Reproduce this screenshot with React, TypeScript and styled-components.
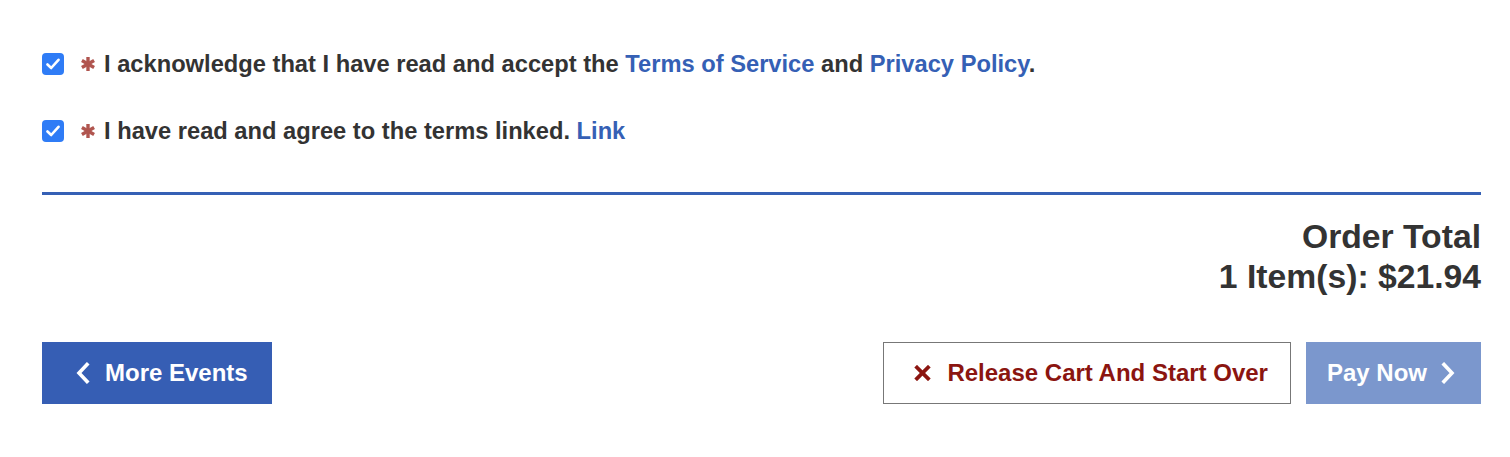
import React, { useState } from "react";
import styled, { createGlobalStyle } from "styled-components";

const GlobalStyle = createGlobalStyle`
  body {
    margin: 0;
    background: #fff;
    font-family: "Liberation Sans", Arial, sans-serif;
    color: #333;
  }
`;

const Page = styled.div`
  padding: 47px 29px 0 42px;
`;

const Checklist = styled.div`
  display: flex;
  flex-direction: column;
  gap: 33px;
`;

const CheckRow = styled.label`
  display: flex;
  align-items: center;
  height: 34px;
  font-size: 23.7px;
  font-weight: bold;
  color: #333;
  cursor: pointer;
`;

const Box = styled.span<{ $checked: boolean }>`
  width: 22px;
  height: 22px;
  border-radius: 4px;
  background: ${(p) => (p.$checked ? "#2f7cf6" : "#fff")};
  border: ${(p) => (p.$checked ? "none" : "1px solid #888")};
  display: flex;
  align-items: center;
  justify-content: center;
  margin-right: 16px;
  flex-shrink: 0;
`;

const Asterisk = styled.span`
  display: flex;
  width: 17px;
  margin-right: 7px;
`;

const TextLink = styled.a`
  color: #3560b5;
  text-decoration: none;
`;

const Divider = styled.hr`
  border: 0;
  height: 3px;
  background: #3560b5;
  margin: 44px 0 0;
`;

const Total = styled.div`
  text-align: right;
  margin-top: 21px;
  font-size: 33.7px;
  line-height: 40px;
  font-weight: bold;
  color: #333;
`;

const Actions = styled.div`
  display: flex;
  align-items: center;
  margin-top: 46px;
`;

const Spacer = styled.div`
  flex: 1;
`;

const Button = styled.button<{ $variant: "primary" | "outline" | "disabled"; $pad: string }>`
  height: 62px;
  display: flex;
  align-items: center;
  padding: ${(p) => p.$pad};
  font-family: "Liberation Sans", Arial, sans-serif;
  font-size: 24px;
  font-weight: bold;
  cursor: pointer;
  border: 1px solid
    ${(p) => (p.$variant === "outline" ? "#777" : p.$variant === "primary" ? "#365eb4" : "#7b97cd")};
  background: ${(p) => (p.$variant === "outline" ? "#fff" : p.$variant === "primary" ? "#365eb4" : "#7b97cd")};
  color: ${(p) => (p.$variant === "outline" ? "#8b1510" : "#fff")};
  margin-left: ${(p) => (p.$variant === "disabled" ? "15px" : "0")};
`;

const Icon = styled.span<{ $w: number; $gap: number; $after?: boolean }>`
  display: flex;
  justify-content: center;
  width: ${(p) => p.$w}px;
  margin-right: ${(p) => (p.$after ? 0 : p.$gap)}px;
  margin-left: ${(p) => (p.$after ? p.$gap : 0)}px;
`;

const Check = () => (
  <svg width="14" height="12" viewBox="0 0 14 12">
    <polyline points="1.5,6.5 5.2,10 12.5,1.8" fill="none" stroke="#fff" strokeWidth="2.6" strokeLinecap="round" strokeLinejoin="round" />
  </svg>
);

const Star = () => (
  <svg width="16" height="16" viewBox="0 0 16 16">
    <g stroke="#b0554f" strokeWidth="3.4" strokeLinecap="butt">
      <line x1="8" y1="1" x2="8" y2="15" />
      <line x1="1.9" y1="4.5" x2="14.1" y2="11.5" />
      <line x1="1.9" y1="11.5" x2="14.1" y2="4.5" />
    </g>
  </svg>
);

const Chevron = ({ dir }: { dir: "left" | "right" }) => (
  <svg width="14" height="22" viewBox="0 0 14 22">
    <polyline
      points={dir === "left" ? "11,2.5 3,11 11,19.5" : "3,2.5 11,11 3,19.5"}
      fill="none"
      stroke="#fff"
      strokeWidth="3.6"
      strokeLinecap="square"
    />
  </svg>
);

const Cross = () => (
  <svg width="17" height="16" viewBox="0 0 17 16">
    <g stroke="#8b1510" strokeWidth="3.8" strokeLinecap="square">
      <line x1="3" y1="2.5" x2="14" y2="13.5" />
      <line x1="14" y1="2.5" x2="3" y2="13.5" />
    </g>
  </svg>
);

function Agreement({ children }: { children: React.ReactNode }) {
  const [checked, setChecked] = useState(true);
  return (
    <CheckRow onClick={() => setChecked(!checked)}>
      <Box $checked={checked}>{checked && <Check />}</Box>
      <Asterisk>
        <Star />
      </Asterisk>
      <span>{children}</span>
    </CheckRow>
  );
}

export default function App() {
  return (
    <>
      <GlobalStyle />
      <Page>
        <Checklist>
          <Agreement>
            I acknowledge that I have read and accept the <TextLink href="#">Terms of Service</TextLink> and{" "}
            <TextLink href="#">Privacy Policy</TextLink>.
          </Agreement>
          <Agreement>
            I have read and agree to the terms linked. <TextLink href="#">Link</TextLink>
          </Agreement>
        </Checklist>
        <Divider />
        <Total>
          <div>Order Total</div>
          <div>1 Item(s): $21.94</div>
        </Total>
        <Actions>
          <Button $variant="primary" $pad="0 23px 0 32px">
            <Icon $w={16} $gap={14}>
              <Chevron dir="left" />
            </Icon>
            More Events
          </Button>
          <Spacer />
          <Button $variant="outline" $pad="0 22px 0 30px">
            <Icon $w={17} $gap={16}>
              <Cross />
            </Icon>
            Release Cart And Start Over
          </Button>
          <Button $variant="disabled" $pad="0 24px 0 20px">
            Pay Now
            <Icon $w={16} $gap={13} $after>
              <Chevron dir="right" />
            </Icon>
          </Button>
        </Actions>
      </Page>
    </>
  );
}
